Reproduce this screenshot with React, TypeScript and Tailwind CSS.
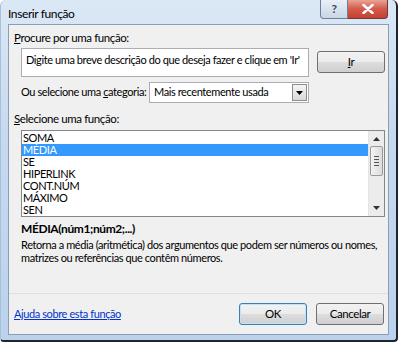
const font = { fontFamily: 'Lato, "Noto Sans", sans-serif' };

const items = ["SOMA", "MÉDIA", "SE", "HIPERLINK", "CONT.NÚM", "MÁXIMO", "SEN"];

function Btn({ label, u, w, focus }: { label: string; u?: boolean; w: string; focus?: boolean }) {
  return (
    <div
      className={`${w} h-[22px] flex items-center justify-center rounded-[3px] border text-[11.5px] text-black ${
        focus ? "border-[#3c7fb1] shadow-[inset_0_0_0_1px_#bfe3f8]" : "border-[#707070]"
      } bg-[linear-gradient(#f2f2f2_0%,#ebebeb_50%,#dddddd_51%,#cfcfcf_100%)]`}
    >
      {u ? (
        <span>
          <span className="underline">I</span>r
        </span>
      ) : (
        label
      )}
    </div>
  );
}

export default function App() {
  return (
    <div className="w-[400px] h-[348px] bg-white overflow-hidden whitespace-nowrap tracking-[-0.4px]" style={font}>
      <div className="relative w-[398px] h-[342px] rounded-t-[6px] rounded-b-[4px] border-r-2 border-b-2 border-l border-r-[#1d2530] border-b-[#1d2530] border-l-[#a9c0da] bg-[linear-gradient(#dbe8f6,#c6d9ef_40%,#bcd2ec)] px-[7px] pb-[5px] pt-[24px] flex flex-col">
        <div className="absolute left-[7px] top-[5px] text-[12px] text-black">Inserir função</div>
        <div className="absolute right-[8px] top-0 flex">
          <div className="w-[28px] h-[19px] rounded-bl-[4px] border border-t-0 border-[#6d7f98] bg-[linear-gradient(#e9eff7,#c9d6e7)] flex items-center justify-center text-[12px] font-bold text-[#3a4a60]">
            ?
          </div>
          <div className="w-[40px] h-[19px] rounded-br-[4px] border border-t-0 border-l-0 border-[#6d3a3a] bg-[linear-gradient(#e8a493,#d2594a_50%,#c7402f)] flex items-center justify-center">
            <svg width="12" height="10" viewBox="0 0 12 10">
              <path d="M1.5 1 L10.5 9 M10.5 1 L1.5 9" stroke="#fff" strokeWidth="2.6" strokeLinecap="round" />
            </svg>
          </div>
        </div>

        <div className="flex-1 border border-[#8b9db5] bg-[#f0f0f0] pl-[5px] pr-[3px] pt-[5px] text-[11.5px] text-black flex flex-col">
          <div className="leading-[15px]">
            <span className="underline">P</span>rocure por uma função:
          </div>
          <div className="mt-[3px] ml-[7px] flex gap-[8px]">
            <div className="w-[289px] h-[29px] border border-[#abadb3] bg-white px-[4px] pt-[3px] leading-[15px] text-[11px]">
              Digite uma breve descrição do que deseja fazer e clique em 'Ir'
            </div>
            <div className="mt-[3px]">
              <Btn label="Ir" u w="w-[68px]" />
            </div>
          </div>
          <div className="mt-[5px] ml-[7px] flex items-center gap-[2px]">
            <span className="w-[126px] text-[11px]">
              Ou selecione uma <span className="underline">c</span>ategoria:
            </span>
            <div className="w-[160px] h-[21px] border border-[#abadb3] bg-white flex items-center pl-[4px]">
              <span className="flex-1 text-[11px]">Mais recentemente usada</span>
              <div className="w-[15px] h-[17px] mr-[1px] border border-[#8d8d8d] bg-[linear-gradient(#f4f4f4,#d9d9d9)] flex items-center justify-center">
                <svg width="7" height="4" viewBox="0 0 7 4">
                  <path d="M0 0 H7 L3.5 4 Z" fill="#000" />
                </svg>
              </div>
            </div>
          </div>
          <div className="mt-[8px] leading-[15px]">
            <span className="underline">S</span>elecione uma função:
          </div>
          <div className="mt-[4px] ml-[7px] h-[87px] border border-[#828790] bg-white flex">
            <div className="flex-1 pt-[1px]">
              {items.map((it) => (
                <div
                  key={it}
                  className={`h-[12px] leading-[12px] pl-[1px] text-[11px] ${
                    it === "MÉDIA" ? "bg-[#3399ff] text-white" : "text-black"
                  }`}
                >
                  {it}
                </div>
              ))}
            </div>
            <div className="w-[16px] bg-[#ececec] border-l border-[#e4e4e4] flex flex-col items-center">
              <svg width="7" height="12" viewBox="0 0 7 12" className="mt-[2px]">
                <path d="M0 8 L3.5 4 L7 8 Z" fill="#333" />
              </svg>
              <div className="w-[13px] h-[30px] mt-[1px] rounded-[2px] border border-[#9a9a9a] bg-[linear-gradient(90deg,#f3f3f3,#dcdcdc)] flex flex-col items-center justify-center gap-[2px]">
                <div className="w-[5px] h-px bg-[#555]" />
                <div className="w-[5px] h-px bg-[#555]" />
                <div className="w-[5px] h-px bg-[#555]" />
                <div className="w-[5px] h-px bg-[#555]" />
              </div>
              <div className="flex-1" />
              <svg width="7" height="12" viewBox="0 0 7 12" className="mb-[2px]">
                <path d="M0 4 L3.5 8 L7 4 Z" fill="#333" />
              </svg>
            </div>
          </div>
          <div className="mt-[4px] ml-[7px] font-bold leading-[15px] text-[12px]">MÉDIA(núm1;núm2;...)</div>
          <div className="mt-[2px] ml-[7px] leading-[13px] text-[11px]">
            Retorna a média (aritmética) dos argumentos que podem ser números ou nomes,
            <br />
            matrizes ou referências que contêm números.
          </div>
          <div className="flex-1" />
          <div className="-ml-[5px] -mr-[3px] border-t border-[#dfdfdf]" />
          <div className="h-[40px] flex items-center pr-[1px]">
            <span className="text-[#0033cc] underline text-[11px]">Ajuda sobre esta função</span>
            <div className="flex-1" />
            <div className="flex gap-[9px]">
              <Btn label="OK" w="w-[68px]" focus />
              <Btn label="Cancelar" w="w-[68px]" />
            </div>
          </div>
        </div>
      </div>
    </div>
  );
}
